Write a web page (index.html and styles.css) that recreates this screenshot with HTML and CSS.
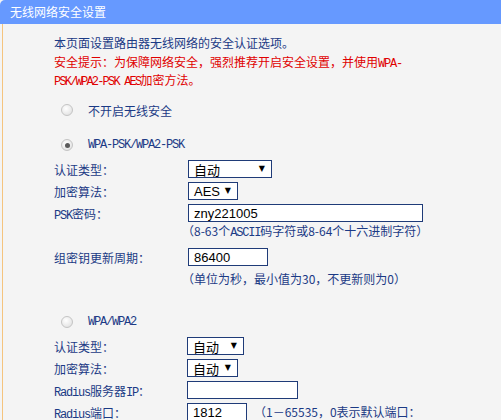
FILE: index.html
```html
<!DOCTYPE html>
<html lang="zh-CN">
<head>
<meta charset="utf-8">
<title>无线网络安全设置</title>
<link rel="stylesheet" href="styles.css">
</head>
<body>
<div class="page">
  <div class="header">无线网络安全设置</div>
  <div class="panel">
    <div class="intro">
      <p class="info">本页面设置路由器无线网络的安全认证选项。</p>
      <p class="warn">安全提示：为保障网络安全，强烈推荐开启安全设置，并使用<span class="m">WPA-</span><br><span class="m tight">PSK/WPA2-PSK AES</span>加密方法。</p>
    </div>

    <div class="radio-row r1"><span class="radio"></span><span class="rlabel">不开启无线安全</span></div>

    <div class="radio-row r2"><span class="radio checked"></span><span class="rlabel m">WPA-PSK/WPA2-PSK</span></div>
    <div class="form">
      <div class="row"><span class="label">认证类型：</span><div class="box sel w84"><span>自动</span><span class="arrow">▼</span></div></div>
      <div class="row"><span class="label">加密算法：</span><div class="box sel w50"><span class="latin">AES</span><span class="arrow">▼</span></div></div>
      <div class="row"><span class="label"><span class="m">PSK</span>密码：</span><div class="box w235"><span class="latin">zny221005</span></div></div>
      <div class="hint h1">（8-63个<span class="m">ASCII</span>码字符或8-64个十六进制字符）</div>
      <div class="row"><span class="label">组密钥更新周期：</span><div class="box w80"><span class="latin">86400</span></div></div>
      <div class="hint h2">（单位为秒，最小值为30，不更新则为0）</div>
    </div>

    <div class="radio-row r3"><span class="radio"></span><span class="rlabel m">WPA/WPA2</span></div>
    <div class="form form2">
      <div class="row"><span class="label">认证类型：</span><div class="box sel w57"><span>自动</span><span class="arrow">▼</span></div></div>
      <div class="row"><span class="label">加密算法：</span><div class="box sel w51"><span>自动</span><span class="arrow">▼</span></div></div>
      <div class="row"><span class="label"><span class="m">Radius</span>服务器<span class="m">IP</span>：</span><div class="box w111"></div></div>
      <div class="row"><span class="label"><span class="m">Radius</span>端口：</span><div class="box w60"><span class="latin">1812</span></div><span class="hint inline">（1－65535，0表示默认端口：</span></div>
    </div>
  </div>
</div>
</body>
</html>
```

FILE: styles.css
```css
html, body {
  margin: 0;
  padding: 0;
  background: #f4f4f4;
}
body {
  font-family: "Noto Sans CJK SC", "Liberation Sans", sans-serif;
  font-size: 12px;
  color: #1b3a85;
  overflow: hidden;
}
.page {
  width: 501px;
  height: 420px;
  display: flex;
  flex-direction: column;
}
.header {
  height: 24px;
  flex: none;
  line-height: 24px;
  background: #6699ff;
  color: #ffffff;
  padding-left: 10px;
  font-size: 12px;
  border-top-left-radius: 5px;
}
.panel {
  flex: 1;
  margin-left: 2px;
  border-left: 1px solid #f5c47e;
  padding-left: 51px;
}
.m {
  font-family: "Liberation Mono", "DejaVu Sans Mono", monospace;
  letter-spacing: -1.2px;
  line-height: 0;
}
.m.tight {
  letter-spacing: -1.8px;
}
.intro {
  padding-top: 10px;
}
.intro p {
  margin: 0;
  line-height: 18.5px;
  overflow: visible;
}
.info {
  color: #1b3a85;
  height: 18.5px;
}
.warn {
  color: #e00000;
  height: 37px;
}
.radio-row {
  display: flex;
  align-items: center;
  height: 20px;
}
.r1 { margin-top: 10.5px; }
.r2 { margin-top: 15px; }
.r3 { margin-top: 26px; }
.radio {
  width: 12px;
  height: 12px;
  border-radius: 50%;
  border: 1px solid #c4c4c4;
  background: radial-gradient(circle at 40% 35%, #ffffff 0%, #e6e6e6 70%, #d4d4d4 100%);
  margin-left: 7px;
  margin-right: 15px;
  box-sizing: border-box;
  position: relative;
}
.radio.checked::after {
  content: "";
  position: absolute;
  left: 2.5px;
  top: 2.5px;
  width: 5px;
  height: 5px;
  border-radius: 50%;
  background: #5a5a5a;
}
.rlabel {
  color: #1b3a85;
}
.form {
  margin-top: 3px;
}
.row {
  display: grid;
  grid-template-columns: 134px auto 1fr;
  align-items: center;
  height: 22px;
}
.form2 .row {
  grid-template-columns: 133px auto 1fr;
}
.label {
  color: #1b3a85;
  white-space: nowrap;
}
.box {
  height: 18px;
  box-sizing: border-box;
  border: 1px solid #1f3b78;
  background: #ffffff;
  display: flex;
  align-items: center;
  padding-left: 5px;
  color: #000000;
  font-size: 13px;
  position: relative;
}
.latin {
  font-family: "Liberation Sans", Arial, sans-serif;
  font-size: 13px;
}
.sel .arrow {
  position: absolute;
  right: 6px;
  top: 3px;
  font-family: "DejaVu Sans", sans-serif;
  font-size: 8px;
  line-height: 10px;
}
.w84 { width: 84px; }
.w50 { width: 50px; }
.w235 { width: 235px; }
.w80 { width: 80px; }
.w57 { width: 57px; }
.w51 { width: 51px; }
.w111 { width: 111px; }
.w60 { width: 60px; }
.hint {
  color: #1b3a85;
  line-height: 14px;
  height: 14px;
  white-space: nowrap;
}
.h1 {
  margin-left: 128px;
  margin-top: 0;
  margin-bottom: 8px;
}
.h2 {
  margin-left: 128px;
  margin-top: 4px;
}
.hint.inline {
  margin-left: 7px;
}
```
